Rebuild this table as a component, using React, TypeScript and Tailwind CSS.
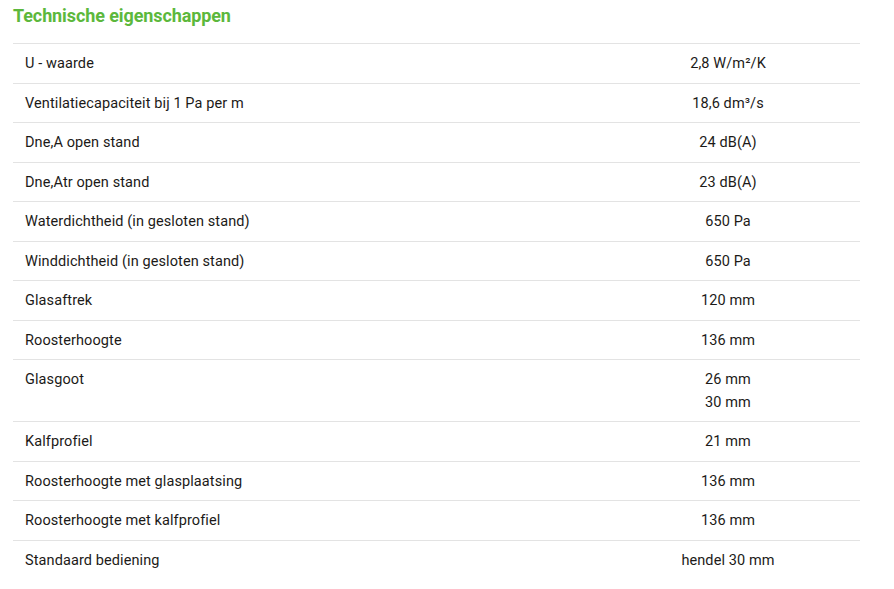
const ROWS: { label: string; values: string[] }[] = [
  { label: "U - waarde", values: ["2,8 W/m²/K"] },
  { label: "Ventilatiecapaciteit bij 1 Pa per m", values: ["18,6 dm³/s"] },
  { label: "Dne,A open stand", values: ["24 dB(A)"] },
  { label: "Dne,Atr open stand", values: ["23 dB(A)"] },
  { label: "Waterdichtheid (in gesloten stand)", values: ["650 Pa"] },
  { label: "Winddichtheid (in gesloten stand)", values: ["650 Pa"] },
  { label: "Glasaftrek", values: ["120 mm"] },
  { label: "Roosterhoogte", values: ["136 mm"] },
  { label: "Glasgoot", values: ["26 mm", "30 mm"] },
  { label: "Kalfprofiel", values: ["21 mm"] },
  { label: "Roosterhoogte met glasplaatsing", values: ["136 mm"] },
  { label: "Roosterhoogte met kalfprofiel", values: ["136 mm"] },
  { label: "Standaard bediening", values: ["hendel 30 mm"] },
];

export default function App() {
  return (
    <div className="min-h-[589px] bg-white px-[13px] pt-[4px] font-['Roboto',sans-serif] text-[#1c1a18]">
      <h3 className="text-[18px] leading-[24px] font-bold tracking-[-0.1px] text-[#5cb83c]">
        Technische eigenschappen
      </h3>

      {/* Specs table */}
      <div className="mt-[15px] w-[847px] border-t border-[#e3e3e3]">
        {ROWS.map((row, i) => (
          <div
            key={row.label}
            className={`grid grid-cols-[583px_1fr] pt-[9px] pb-[7px] text-[14.5px] leading-[22.5px] tracking-[0.1px] ${
              i < ROWS.length - 1 ? "border-b border-[#e3e3e3]" : ""
            }`}
          >
            <div className="pl-[12px]">{row.label}</div>
            <div className="flex flex-col items-center">
              {row.values.map((v) => (
                <span key={v}>{v}</span>
              ))}
            </div>
          </div>
        ))}
      </div>
    </div>
  );
}
